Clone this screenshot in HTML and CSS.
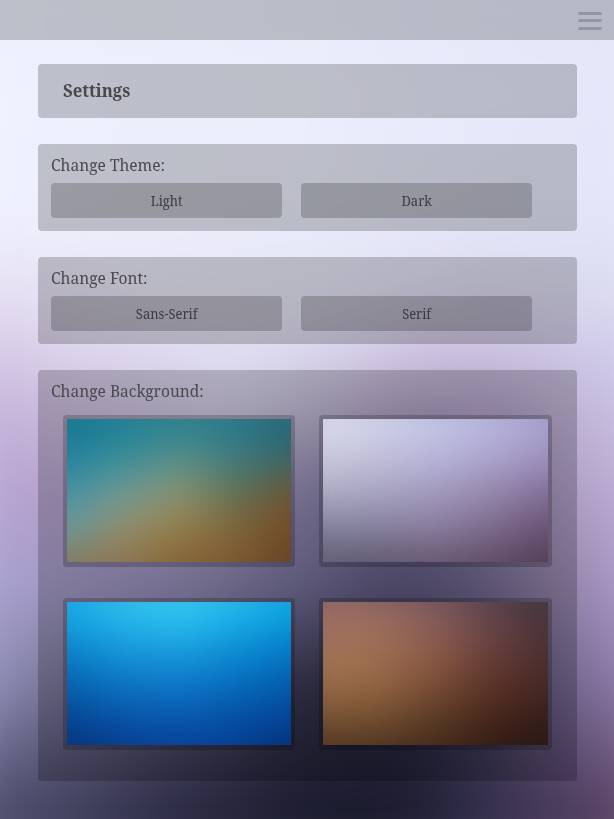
FILE: index.html
```html
<!DOCTYPE html>
<html lang="en">
<head>
<meta charset="utf-8">
<title>Settings</title>
<link rel="stylesheet" href="styles.css">
</head>
<body>
<div class="mesh page-mesh"><i></i><i></i><i></i><i></i><i></i><i></i><i></i><i></i><i></i><i></i><i></i></div>
<header class="topbar">
  <button class="menu" aria-label="Menu"><span></span><span></span><span></span></button>
</header>
<main class="content">
  <section class="panel title"><h1>Settings</h1></section>
  <section class="panel">
    <h2>Change Theme:</h2>
    <div class="buttons"><button><span>Light</span></button><button><span>Dark</span></button></div>
  </section>
  <section class="panel">
    <h2>Change Font:</h2>
    <div class="buttons"><button><span>Sans-Serif</span></button><button><span>Serif</span></button></div>
  </section>
  <section class="panel backgrounds">
    <h2>Change Background:</h2>
    <div class="thumbs">
      <div class="thumb"><div class="view"><div class="mesh coast"><i></i><i></i><i></i><i></i><i></i></div></div></div>
      <div class="thumb"><div class="view"><div class="mesh lilac"><i></i><i></i><i></i><i></i><i></i></div></div></div>
      <div class="thumb"><div class="view"><div class="mesh ocean"><i></i><i></i><i></i><i></i><i></i></div></div></div>
      <div class="thumb"><div class="view"><div class="mesh ember"><i></i><i></i><i></i><i></i><i></i></div></div></div>
    </div>
  </section>
</main>
</body>
</html>
```
FILE: styles.css
```css
* { box-sizing: border-box; }
body {
  margin: 0;
  height: 819px;
  overflow: hidden;
  color: #48484d;
  font-family: "Noto Serif", "Droid Serif", "DejaVu Serif", serif;
}
h1, h2 { margin: 0; }

/* Colour meshes: every row fades in over the previous one */
.mesh { display: grid; }
.mesh i {
  grid-area: 1 / 1;
  background: linear-gradient(to right, var(--c));
  -webkit-mask-image: linear-gradient(transparent var(--a), #000 var(--b));
  mask-image: linear-gradient(transparent var(--a), #000 var(--b));
}
.mesh i:first-child { -webkit-mask-image: none; mask-image: none; }

.page-mesh { position: fixed; inset: 0; z-index: -1; filter: blur(22px); transform: scale(1.15, 1.12); }
.page-mesh i:nth-child(1) { --c: #ebf0fd, #ebeffb, #e9ecfa, #e6e8f8, #e5e7f7; }
.page-mesh i:nth-child(2) { --a: 40px; --b: 140px; --c: #eff2ff, #eceffd, #ebeefb, #e7eafa, #e4e7fa; }
.page-mesh i:nth-child(3) { --a: 140px; --b: 225px; --c: #f0f2ff, #ededfb, #eaedfa, #e5e7f8, #e2e5f8; }
.page-mesh i:nth-child(4) { --a: 225px; --b: 270px; --c: #ebe9f8, #ebebfa, #e7e9f8, #e0e1f4, #dee1f5; }
.page-mesh i:nth-child(5) { --a: 270px; --b: 317px; --c: #e1d9ee, #e7e4f5, #e4e3f4, #dad6ea, #d9daf0; }
.page-mesh i:nth-child(6) { --a: 317px; --b: 359px; --c: #d4c7e5 30px, #dbd2eb 85px, #e1def2 243px, #d9d4ec 327px, #ccc0e0 416px, #cbc0e1 478px, #d1cdec 584px; }
.page-mesh i:nth-child(7) { --a: 359px; --b: 401px; --c: #c7b5dc 30px, #cdbfde 85px, #d6d2e7 243px, #c6bfd8 310px, #b3a5c5 398px, #b5a6c9 478px, #c5bbda 545px, #cac1e5 584px; }
.page-mesh i:nth-child(8) { --a: 401px; --b: 483px; --c: #b9a6d4 30px, #b4a0cb 85px, #aea3c8 212px, #8e86ae 307px, #736b99 398px, #8d80ae 478px, #b1a2c5 536px, #bdaad6 584px; }
.page-mesh i:nth-child(9) { --a: 483px; --b: 565px; --c: #a9a1cf 30px, #a69dca 85px, #968fba 195px, #757099 307px, #60597f 380px, #6b6389 443px, #9485a7 525px, #aa99c9 584px; }
.page-mesh i:nth-child(10) { --a: 565px; --b: 655px; --c: #8f8fba 30px, #7b7999 80px, #5d5a7c 195px, #343249 307px, #2b2941 390px, #413b5a 460px, #756a91 536px, #8f79a9 584px; }
.page-mesh i:nth-child(11) { --a: 655px; --b: 765px; --c: #4d4d6d 30px, #444361 85px, #2a2941 200px, #1b1b2e 307px, #1b1b2e 390px, #332f4c 460px, #4c3b5c 535px, #5e4566 584px; }

.topbar {
  height: 40px;
  display: flex;
  align-items: flex-start;
  justify-content: flex-end;
  padding: 12px 12px 0 0;
  background: rgba(0, 0, 0, .2);
}
.menu {
  display: grid;
  gap: 4.4px;
  width: 24px;
  padding: 0;
  border: 0;
  background: none;
}
.menu span { height: 3px; border-radius: 1.5px; background: #9495a3; }

.content {
  display: grid;
  gap: 25.6px;
  padding: 24px 37.2px 0 37.5px;
}
.panel {
  height: 87.3px;
  padding: 0 13px;
  border-radius: 4px;
  background: rgba(0, 0, 0, .2);
}
.panel.title { height: 54.4px; padding: 0 25.5px; }
.panel.backgrounds { height: 411px; }
h1, h2 { transform-origin: left; }
h1 { font-size: 17.8px; line-height: 53px; transform: scaleX(.94); }
h2 { font-size: 16.8px; font-weight: 400; line-height: 24px; padding-top: 9px; height: 39px; transform: scaleX(.926); }
.buttons { display: flex; gap: 19px; }
.buttons button {
  width: 231.3px;
  height: 35.5px;
  padding: 0;
  border: 0;
  border-radius: 4px;
  background: rgba(0, 0, 0, .2);
  color: #3a3a40;
  font: 14px/35px "Noto Serif", "Droid Serif", "DejaVu Serif", serif;
}
.buttons span { display: block; transform: scaleX(.925); }
.thumbs {
  display: grid;
  grid-template-columns: 232.5px 232.5px;
  gap: 31.5px 24.3px;
  padding: 6.3px 0 0 12px;
}
.thumb {
  height: 151.5px;
  padding: 4px;
  border-radius: 4px;
  background: rgba(0, 0, 0, .2);
}
.view { height: 143.3px; overflow: hidden; }
.thumb .mesh { height: 100%; filter: blur(13px); transform: scale(1.24, 1.38); }
.thumb i { background: linear-gradient(to right, var(--c)) center / 86% 100% no-repeat, linear-gradient(to right, var(--c)); }
.thumb i:nth-child(2) { --a: 12%; --b: 31%; }
.thumb i:nth-child(3) { --a: 31%; --b: 50%; }
.thumb i:nth-child(4) { --a: 50%; --b: 69%; }
.thumb i:nth-child(5) { --a: 69%; --b: 88%; }

.coast i:nth-child(1) { --c: #14738f, #1c7d95, #26808f, #25768a, #26647a; }
.coast i:nth-child(2) { --c: #1c7f9a, #2f8c98, #4f8e8d, #387c84, #2f6468; }
.coast i:nth-child(3) { --c: #3c8fa6, #6f9a9b, #8b9574, #5f6f53, #725334; }
.coast i:nth-child(4) { --c: #659fa8, #948f6c, #97804a, #80643b, #74461f; }
.coast i:nth-child(5) { --c: #8a7555, #8f734f, #80602f, #7b542d, #5d4022; }

.lilac i:nth-child(1) { --c: #dfdff0, #d3d5ec, #c6c8e8, #b7b5dd, #a69fd0; }
.lilac i:nth-child(2) { --c: #cfcfe2, #c5c4dc, #bab9dc, #b0a9d2, #9f94c0; }
.lilac i:nth-child(3) { --c: #b2b1c6, #a9a6c3, #a39bc0, #9487ad, #806a94; }
.lilac i:nth-child(4) { --c: #83829b, #86829f, #8a7e9f, #7d6b8c, #664e6f; }
.lilac i:nth-child(5) { --c: #5d5c72, #5b5468, #65536d, #5c4661, #4c3850; }

.ocean i:nth-child(1) { --c: #18aee8, #2fc3ef, #38d0f4, #25c2f0, #0daee8; }
.ocean i:nth-child(2) { --c: #0b8fd6, #1da6e2, #21aee6, #109bdc, #0585d0; }
.ocean i:nth-child(3) { --c: #0768b4, #0e7ecb, #1183d0, #0776c5, #0461b0; }
.ocean i:nth-child(4) { --c: #054a96, #0a5aae, #0a5eb4, #0554a6, #05469a; }
.ocean i:nth-child(5) { --c: #052f78, #073a8a, #07409a, #063c90, #052c78; }

.ember i:nth-child(1) { --c: #946868, #8d6664, #785660, #57424c, #40343e; }
.ember i:nth-child(2) { --c: #a27360, #a27059, #8e6054, #694244, #483036; }
.ember i:nth-child(3) { --c: #a3754f, #9d6d4a, #84523a, #5e352c, #482a28; }
.ember i:nth-child(4) { --c: #7e5a3a, #7e5634, #60402a, #4b281c, #38201c; }
.ember i:nth-child(5) { --c: #523722, #4e3420, #432818, #301a12, #221412; }
```
